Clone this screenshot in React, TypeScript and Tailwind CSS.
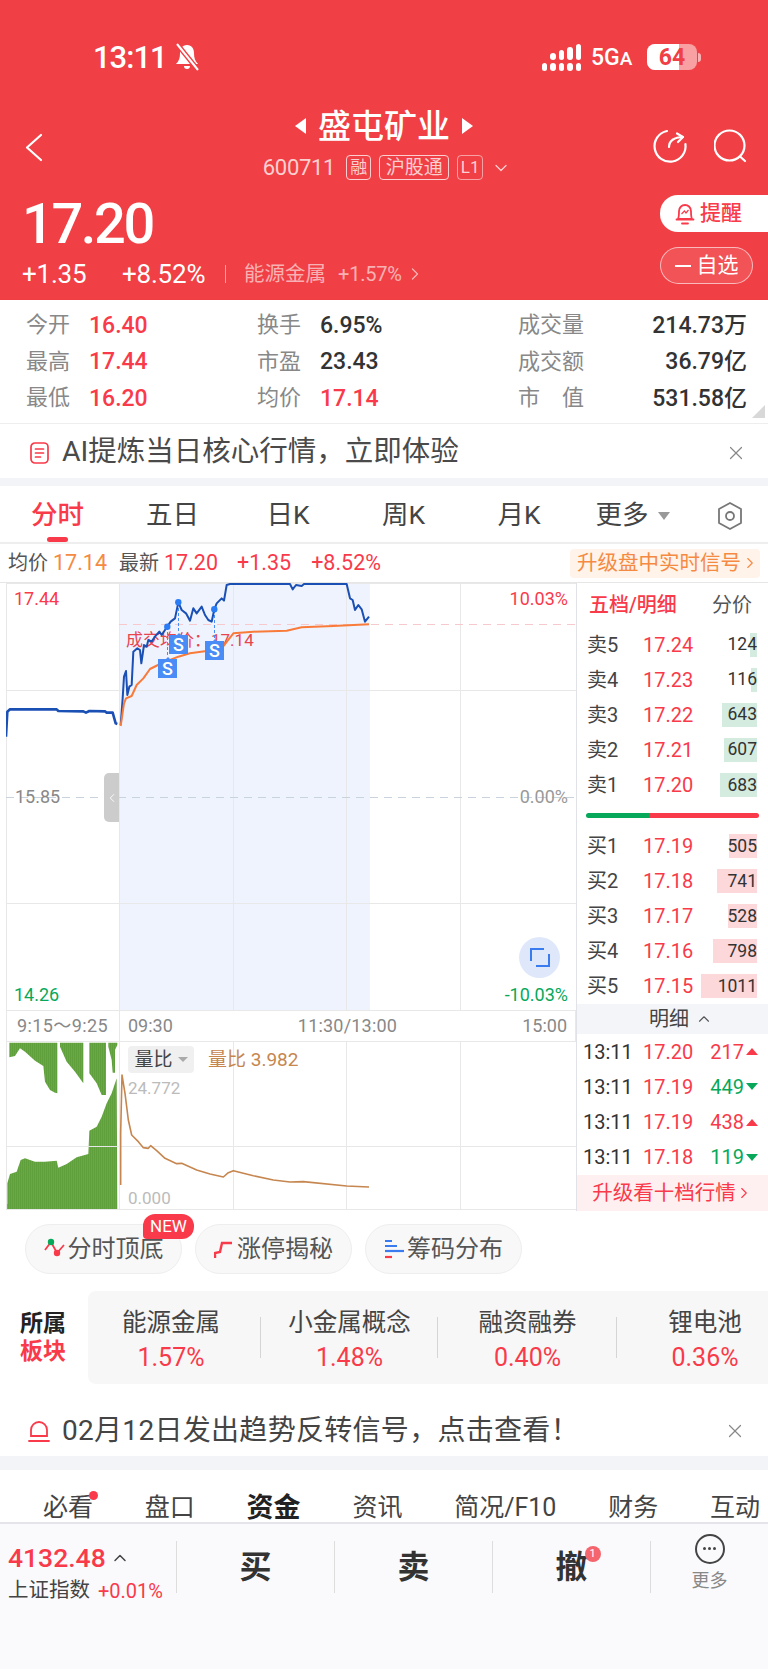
import { X, ChevronLeft, ChevronRight, ChevronDown, ChevronUp } from "lucide-react";

type Pt = [number, number];

// chart points were read off 3x crops, so map them back to page coordinates
const toPts = (pts: Pt[], baseY: number) => pts.map(([x, y]) => `${x / 3},${baseY + y / 3}`).join(" ");

const preMarket: Pt[] = [[18, 500], [22, 425], [30, 418], [170, 418], [175, 423], [250, 424], [258, 428], [268, 423], [315, 424], [320, 428], [338, 428], [347, 460], [352, 462]];
const priceLine: Pt[] = [[362, 465], [368, 385], [372, 320], [378, 303], [382, 375], [388, 350], [395, 345], [400, 245], [412, 235], [420, 240], [424, 280], [432, 225], [440, 230], [445, 210], [455, 215], [465, 200], [478, 185], [485, 195], [495, 180], [502, 170], [512, 155], [525, 145], [535, 97], [545, 120], [558, 130], [570, 152], [580, 115], [590, 130], [605, 110], [615, 135], [625, 150], [635, 155], [643, 118], [650, 100], [665, 85], [672, 92], [680, 45], [690, 42], [870, 42], [878, 58], [888, 45], [905, 48], [912, 42], [1040, 42], [1050, 85], [1058, 90], [1065, 120], [1075, 105], [1085, 118], [1095, 155], [1107, 140]];
const avgLine: Pt[] = [[362, 468], [372, 400], [378, 385], [395, 378], [410, 345], [430, 325], [450, 297], [480, 282], [510, 270], [535, 260], [570, 250], [620, 243], [665, 235], [700, 190], [760, 185], [860, 182], [905, 172], [1000, 168], [1107, 163]];
const ratioLine: Pt[] = [[362, 555], [362, 400], [366, 225], [375, 280], [385, 360], [395, 405], [415, 425], [430, 443], [445, 445], [452, 437], [470, 452], [495, 475], [530, 491], [545, 490], [590, 510], [630, 522], [670, 531], [685, 518], [700, 512], [760, 527], [820, 540], [870, 546], [910, 545], [1040, 558], [1107, 561]];
const bottomBars: Pt[] = [[22, 510], [22, 430], [30, 402], [50, 395], [62, 360], [75, 355], [105, 365], [135, 365], [170, 362], [175, 383], [200, 372], [230, 352], [265, 342], [268, 272], [290, 260], [305, 230], [320, 190], [335, 160], [350, 115], [352, 510]];
const topBars: Pt[] = [[28, 8], [28, 52], [45, 48], [60, 25], [75, 35], [105, 62], [130, 78], [135, 125], [150, 150], [165, 158], [172, 160], [172, 8], [180, 8], [180, 20], [200, 65], [225, 95], [250, 130], [250, 8], [268, 8], [268, 100], [290, 130], [305, 165], [318, 165], [318, 8], [325, 8], [325, 20], [335, 60], [338, 98], [345, 98], [345, 30], [352, 15], [352, 8]];

const stats = [
  ["今开", "16.40", "换手", "6.95%", "成交量", "214.73万"],
  ["最高", "17.44", "市盈", "23.43", "成交额", "36.79亿"],
  ["最低", "16.20", "均价", "17.14", "市　值", "531.58亿"],
] as const;

const asks = [
  ["卖5", "17.24", "124", 7],
  ["卖4", "17.23", "116", 6],
  ["卖3", "17.22", "643", 35],
  ["卖2", "17.21", "607", 33],
  ["卖1", "17.20", "683", 37],
] as const;
const bids = [
  ["买1", "17.19", "505", 28],
  ["买2", "17.18", "741", 40],
  ["买3", "17.17", "528", 29],
  ["买4", "17.16", "798", 44],
  ["买5", "17.15", "1011", 56],
] as const;
const trades = [
  ["17.20", "217", true],
  ["17.19", "449", false],
  ["17.19", "438", true],
  ["17.18", "119", false],
] as const;
const sectors = [
  ["能源金属", "1.57%", "w-[173px] pr-[7px]"],
  ["小金属概念", "1.48%", "w-[177px]"],
  ["融资融券", "0.40%", "w-[179px]"],
  ["锂电池", "0.36%", "w-[151px] pl-[25px]"],
];
const periods = [
  ["五日", "w-[115px]"],
  ["日K", "w-[116px]"],
  ["周K", "w-[115px]"],
  ["月K", "w-[116px]"],
];

function StatusBar() {
  return (
    <div className="flex h-[104px] items-center justify-between pl-[93px] pr-[67px] pt-[10px] text-white">
      <div className="flex items-center gap-[7px]">
        <span className="text-[31px] font-medium leading-none tracking-[-1px]">13:11</span>
        <svg width="26" height="28" viewBox="0 0 26 28" fill="white">
          <path d="M13 2c-5 0-7 4-7 8 0 5-1 8-4 11h22c-3-3-4-6-4-11 0-4-2-8-7-8zM10 23a3 3 0 0 0 6 0z" />
          <path d="M3 1l21 26" stroke="#f04045" strokeWidth="5" />
          <path d="M3 1l21 26" stroke="white" strokeWidth="2" />
        </svg>
      </div>
      <div className="flex items-center">
        <div className="flex items-end gap-[3px]">
          {[0, 1, 2, 3, 4].map((i) => (
            <div key={i} className="flex flex-col gap-[3px]">
              {i > 0 && <div className="w-[5.5px] rounded-full bg-white" style={{ height: 4 + i * 3 }} />}
              <div className="h-[8px] w-[5.5px] rounded-full bg-white" />
            </div>
          ))}
        </div>
        <span className="ml-[10px] w-[44px] text-[23px] font-medium leading-none">
          5G<span className="text-[19px]">A</span>
        </span>
        <div className="relative ml-[12px] flex h-[26px] w-[50px] items-center justify-center overflow-hidden rounded-[8px] bg-white/50">
          <div className="absolute inset-y-0 left-0 w-[32px] bg-white" />
          <span className="relative text-[23px] font-bold leading-none text-[#f04045]">64</span>
        </div>
        <div className="ml-[1px] h-[9px] w-[3px] rounded-r-full bg-white/60" />
      </div>
    </div>
  );
}

function NavRow() {
  return (
    <div className="grid h-[84px] grid-cols-[1fr_auto_1fr] text-white">
      <div className="flex items-center pl-[25px] pt-[2px]">
        <svg width="18" height="29" viewBox="0 0 18 29" fill="none" stroke="white" strokeWidth="2.2" strokeLinecap="round" strokeLinejoin="round">
          <path d="M16 2L2 14.5 16 27" />
        </svg>
      </div>
      <div className="flex flex-col items-center">
        <div className="flex h-[44px] items-center gap-[12px]">
          <div className="h-0 w-0 border-y-[8px] border-r-[11px] border-y-transparent border-r-white" />
          <span className="text-[33px] font-medium leading-none">盛屯矿业</span>
          <div className="h-0 w-0 border-y-[8px] border-l-[11px] border-y-transparent border-l-white" />
        </div>
        <div className="ml-[6px] mt-[7px] flex items-center text-white/75">
          <span className="text-[22px] leading-none tracking-[-0.3px]">600711</span>
          <span className="ml-[11px] flex h-[25px] w-[25px] items-center justify-center rounded-[4px] border border-white/75 text-[17px] leading-none">融</span>
          <span className="ml-[8px] flex h-[25px] w-[70px] items-center justify-center rounded-[4px] border border-white/75 text-[19px] leading-none">沪股通</span>
          <span className="ml-[8px] flex h-[25px] w-[26px] items-center justify-center rounded-[4px] border border-white/50 text-[17px] leading-none">L1</span>
          <ChevronDown className="ml-[8px] h-[20px] w-[20px]" strokeWidth={1.5} />
        </div>
      </div>
      <div className="flex items-center justify-end gap-[26px] pr-[18px]">
        <svg width="36" height="36" viewBox="0 0 36 36" fill="none" stroke="white" strokeWidth="2.2" strokeLinecap="round" strokeLinejoin="round">
          <path d="M15 3A15.5 15.5 0 1 0 33.4 16" />
          <path d="M17 19c0-6 5-10 14-10" />
          <path d="M25 5.5l6 3.5-5 5" />
        </svg>
        <svg width="36" height="36" viewBox="0 0 36 36" fill="none" stroke="white" strokeWidth="2.2" strokeLinecap="round">
          <circle cx="15.5" cy="17.5" r="15" />
          <path d="M26 28.5l5 4.5" />
        </svg>
      </div>
    </div>
  );
}

function PriceRow() {
  return (
    <div className="flex h-[112px] justify-between">
      <div className="flex flex-col pl-[22px] text-white">
        <span className="mt-[7px] h-[58px] text-[56px] font-medium leading-[58px] tracking-[-2.4px]">17.20</span>
        <div className="mt-[8px] flex items-center text-[26px] leading-none tracking-[-0.2px]">
          <span className="w-[100px]">+1.35</span>
          <span className="w-[103px]">+8.52%</span>
          <div className="h-[18px] w-px bg-white/50" />
          <span className="ml-[18px] text-[20.5px] tracking-normal text-white/60">能源金属</span>
          <span className="ml-[12px] text-[20px] text-white/60">+1.57%</span>
          <ChevronRight className="ml-[3px] h-[22px] w-[20px] text-white/60" strokeWidth={1.5} />
        </div>
      </div>
      <div className="flex flex-col items-end pt-[7px]">
        <div className="flex h-[37px] w-[108px] items-center gap-[5px] rounded-l-[18px] bg-white pl-[15px] text-[#f93a4a]">
          <svg width="20" height="24" viewBox="0 0 20 24" fill="none" stroke="currentColor" strokeWidth="1.8">
            <path d="M3 17c1-2 1-5 1-8a6 6 0 0 1 12 0c0 3 0 6 1 8zM1.5 17.5h17M7 21.5h6" strokeLinecap="round" strokeLinejoin="round" />
            <path d="M6.5 12l3-3 1.5 2 2.5-3" strokeWidth="1.2" />
          </svg>
          <span className="text-[21px] font-medium leading-none">提醒</span>
        </div>
        <div className="mr-[15px] mt-[15px] flex h-[37px] w-[93px] items-center justify-center gap-[6px] rounded-full border border-white/60 bg-white/10 text-[21px] leading-none text-white">
          <div className="h-[2px] w-[16px] bg-white" />
          自选
        </div>
      </div>
    </div>
  );
}

function StatsGrid() {
  return (
    <div className="relative h-[123px] bg-white pt-[7px]">
      {stats.map(([l1, v1, l2, v2, l3, v3], i) => (
        <div key={l1} className="grid h-[36.5px] grid-cols-[231px_261px_229px] items-center pl-[26px] text-[23px] leading-none">
          <div className="flex items-center">
            <span className="w-[63px] text-[22px] text-[#888888]">{l1}</span>
            <span className="font-medium text-[#f93a4a]">{v1}</span>
          </div>
          <div className="flex items-center">
            <span className="w-[63px] text-[22px] text-[#888888]">{l2}</span>
            <span className={i === 2 ? "font-medium text-[#f93a4a]" : "font-medium text-[#333333]"}>{v2}</span>
          </div>
          <div className="flex items-center justify-between">
            <span className="text-[22px] text-[#888888]">{l3}</span>
            <span className="font-medium text-[#333333]">{v3}</span>
          </div>
        </div>
      ))}
      <div className="absolute bottom-[5px] right-[3px] h-0 w-0 border-b-[13px] border-l-[13px] border-b-[#d8d8d8] border-l-transparent" />
    </div>
  );
}

function AiRow() {
  return (
    <div className="flex h-[55px] items-center border-t border-[#eeeeee] bg-white pl-[30px] pr-[21px] pt-[3px]">
      <svg width="19" height="22" viewBox="0 0 19 22" fill="none" stroke="#f93a4a" strokeWidth="1.7" strokeLinecap="round">
        <rect x="1" y="1" width="17" height="20" rx="4" />
        <path d="M5.5 7h8M5.5 11h8M5.5 15h5" />
      </svg>
      <span className="ml-[13px] text-[28.5px] leading-none text-[#4a4a4a]">AI提炼当日核心行情，立即体验</span>
      <X className="ml-auto h-[22px] w-[22px] text-[#888888]" strokeWidth={1.3} />
    </div>
  );
}

function PeriodTabs() {
  return (
    <div className="flex h-[58px] items-center border-b-2 border-[#eeeeee] bg-white pt-[3px] text-[26.5px] leading-none">
      <div className="relative flex h-full w-[115px] items-center justify-center font-medium text-[#f93a4a]">
        分时
        <div className="absolute bottom-0 h-[5px] w-[21px] rounded-full bg-[#f93a4a]" />
      </div>
      {periods.map(([t, w]) => (
        <div key={t} className={`flex items-center justify-center text-[#444444] ${w}`}>{t}</div>
      ))}
      <div className="flex w-[111px] items-center justify-center gap-[9px] text-[#444444]">
        更多
        <div className="h-0 w-0 border-x-[6px] border-t-[8px] border-x-transparent border-t-[#999999]" />
      </div>
      <svg className="ml-[28px]" width="28" height="30" viewBox="0 0 28 30" fill="none" stroke="#777777" strokeWidth="1.8">
        <path d="M14 2l11 6v14l-11 6-11-6V8z" strokeLinejoin="round" />
        <circle cx="14" cy="15" r="4" />
      </svg>
    </div>
  );
}

function QuoteLine() {
  return (
    <div className="flex h-[39px] items-center justify-between border-b border-[#e6e6e6] bg-white pl-[8px] pr-[8px] text-[21.5px] leading-none">
      <div className="flex items-center">
        <span className="text-[20px] text-[#555555]">均价</span>
        <span className="ml-[5px] text-[#f58a42]">17.14</span>
        <span className="ml-[12px] text-[20px] text-[#555555]">最新</span>
        <span className="ml-[5px] text-[#f93a4a]">17.20</span>
        <span className="ml-[19px] text-[#f93a4a]">+1.35</span>
        <span className="ml-[20px] text-[#f93a4a]">+8.52%</span>
      </div>
      <div className="flex h-[29px] w-[190px] items-center justify-center rounded-[4px] bg-[#fff3ea] text-[20.5px] text-[#f58a42]">
        升级盘中实时信号
        <ChevronRight className="-mr-[6px] h-[24px] w-[18px]" strokeWidth={1.5} />
      </div>
    </div>
  );
}

function SellMark({ x, y }: { x: number; y: number }) {
  return (
    <g>
      <path d={`M${x} ${y}h8l2-2 2 2h7v19h-19z`} fill="#4a8cf5" />
      <text x={x + 9.5} y={y + 15.5} textAnchor="middle" fontSize="18" fontWeight="500" fill="white">S</text>
    </g>
  );
}

function PriceChart() {
  return (
    <div className="relative h-[427px]">
      <svg className="block" width="570" height="427" viewBox="6 583 570 427" fill="none">
        <rect x="119" y="583" width="251" height="427" fill="#eef3fe" />
        <g stroke="#e8e8e8" strokeWidth="1">
          <path d="M6.5 583v427M119.5 583v427M233.5 583v427M346.5 583v427M460.5 583v427M6 690.5h570M6 903.5h570M6 583.5h570" />
        </g>
        <path d="M6 797.5h570" stroke="#c9d3de" strokeWidth="1" strokeDasharray="8 6" />
        <path d="M119 624.5h457" stroke="#f7c9cc" strokeWidth="1" strokeDasharray="8 6" />
        <text x="126" y="646" fontSize="17" fill="#e8454f">成交均价：17.14</text>
        <path d="M167.5 627v30M178.5 603v30M214.5 610v30" stroke="#4a8cf5" strokeWidth="1" strokeDasharray="3 2" />
        <polyline points={toPts(preMarket, 570)} stroke="#1a4fb4" strokeWidth="2.6" strokeLinejoin="round" />
        <polyline points={toPts(priceLine, 570)} stroke="#1a4fb4" strokeWidth="2" strokeLinejoin="round" />
        <polyline points={toPts(avgLine, 570)} stroke="#f97b3a" strokeWidth="2" strokeLinejoin="round" />
        <circle cx="167.3" cy="626.7" r="3.2" fill="#2a7cf5" />
        <circle cx="178.3" cy="602.3" r="3.2" fill="#2a7cf5" />
        <circle cx="214.3" cy="609.3" r="3.2" fill="#2a7cf5" />
        <SellMark x={158} y={659} />
        <SellMark x={169} y={635} />
        <SellMark x={205} y={641} />
      </svg>
      <span className="absolute left-[8px] top-[7px] text-[18px] leading-[18px] text-[#f93a4a]">17.44</span>
      <span className="absolute right-[8px] top-[7px] text-[18px] leading-[18px] text-[#f93a4a]">10.03%</span>
      <span className="absolute left-[9px] top-[205px] text-[18px] leading-[18px] text-[#888888]">15.85</span>
      <span className="absolute right-[8px] top-[205px] text-[18px] leading-[18px] text-[#999999]">0.00%</span>
      <span className="absolute left-[8px] top-[403px] text-[18px] leading-[18px] text-[#08a85a]">14.26</span>
      <span className="absolute right-[8px] top-[403px] text-[18px] leading-[18px] text-[#08a85a]">-10.03%</span>
      <div className="absolute left-[98px] top-[190px] flex h-[49px] w-[15px] items-center justify-center rounded-l-[5px] bg-[#cccccc]">
        <ChevronLeft className="h-[20px] w-[14px] text-white" strokeWidth={1.5} />
      </div>
      <div className="absolute left-[513px] top-[354px] flex h-[41px] w-[41px] items-center justify-center rounded-full bg-[#dfe8fb]">
        <svg width="20" height="19" viewBox="0 0 20 19" fill="none" stroke="#3a7cf0" strokeWidth="2">
          <path d="M1 13V1h13M19 6v12H6" />
        </svg>
      </div>
    </div>
  );
}

function TimeAxis() {
  return (
    <div className="flex h-[32px] items-center border-x border-y border-[#e8e8e8] text-[18px] leading-none text-[#888888]">
      <div className="flex h-full w-[113px] items-center border-r border-[#e8e8e8] pl-[10px] tracking-[0.4px]">9:15～9:25</div>
      <span className="ml-[8px]">09:30</span>
      <span className="ml-[125px] tracking-[0.2px]">11:30/13:00</span>
      <span className="ml-auto mr-[8px]">15:00</span>
    </div>
  );
}

function RatioChart() {
  return (
    <div className="relative h-[168px]">
      <svg className="block" width="570" height="168" viewBox="6 1042 570 168" fill="none">
        <defs>
          <pattern id="volume-bars" width="2" height="4" patternUnits="userSpaceOnUse">
            <rect width="2" height="4" fill="#6aa846" />
            <rect width="1" height="4" fill="#5f9f3c" />
          </pattern>
        </defs>
        <polygon points={toPts(bottomBars, 1040)} fill="url(#volume-bars)" />
        <polygon points={toPts(topBars, 1040)} fill="url(#volume-bars)" />
        <rect x="6" y="1204" width="1.5" height="6" fill="#777777" />
        <path d="M6.5 1042v168M119.5 1042v168M233.5 1042v168M346.5 1042v168M460.5 1042v168M6 1146.5h570M6 1209.5h570" stroke="#e8e8e8" />
        <polyline points={toPts(ratioLine, 1000)} stroke="#c6864f" strokeWidth="1.6" strokeLinejoin="round" />
      </svg>
      <div className="absolute left-[122px] top-[4px] flex h-[27px] w-[66px] items-center justify-center gap-[5px] rounded-[4px] bg-[#f0f0f0] text-[19px] leading-none text-[#444444]">
        量比
        <div className="h-0 w-0 border-x-[5px] border-t-[5px] border-x-transparent border-t-[#aaaaaa]" />
      </div>
      <span className="absolute left-[202px] top-[8px] text-[19px] leading-[20px] text-[#c6864f]">量比 3.982</span>
      <span className="absolute left-[122px] top-[37px] text-[17px] leading-[18px] text-[#bbbbbb]">24.772</span>
      <span className="absolute left-[122px] top-[147px] text-[17px] leading-[18px] text-[#bbbbbb]">0.000</span>
    </div>
  );
}

function BookRow({ row, tint, rowHeight }: { row: readonly [string, string, string, number]; tint: string; rowHeight: string }) {
  const [label, price, qty, bar] = row;
  return (
    <div className={`relative flex items-center pl-[10px] pr-[11px] ${rowHeight}`}>
      <div className={`absolute right-[11px] h-[24px] ${tint}`} style={{ width: bar }} />
      <span className="w-[56px] text-[20px] leading-none text-[#444444]">{label}</span>
      <span className="relative text-[20px] leading-none text-[#f93a4a]">{price}</span>
      <span className="relative ml-auto text-[17.5px] leading-none text-[#333333]">{qty}</span>
    </div>
  );
}

function OrderBook() {
  return (
    <div className="flex w-[192px] flex-col border-l border-[#e0e2e8] bg-white">
      <div className="flex h-[44px] items-center justify-between pl-[12px] pr-[16px]">
        <span className="text-[20px] font-medium leading-none text-[#f93a4a]">五档/明细</span>
        <span className="text-[20px] leading-none text-[#555555]">分价</span>
      </div>
      {asks.map((r) => (
        <BookRow key={r[0]} row={r} tint="bg-[#d4ecdf]" rowHeight="h-[35.2px]" />
      ))}
      <div className="flex h-[26px] items-center pl-[9px] pr-[9px]">
        <div className="h-[5px] w-[63px] rounded-l-full bg-[#08a85a]" />
        <div className="h-[5px] flex-1 rounded-r-full bg-[#f93a4a]" />
      </div>
      {bids.map((r) => (
        <BookRow key={r[0]} row={r} tint="bg-[#fdd8da]" rowHeight="h-[35px]" />
      ))}
      <div className="flex h-[30px] items-center justify-center gap-[6px] bg-[#f3f5f9] pl-[17px] text-[20px] leading-none text-[#444444]">
        明细
        <ChevronUp className="h-[20px] w-[18px] text-[#555555]" strokeWidth={1.5} />
      </div>
      {trades.map(([price, qty, up], i) => (
        <div key={i} className="flex h-[35.25px] items-center pl-[6px] pr-[10px] text-[20px] leading-none">
          <span className="w-[60px] text-[#333333]">13:11</span>
          <span className="text-[#f93a4a]">{price}</span>
          <span className={up ? "ml-auto text-[#f93a4a]" : "ml-auto text-[#08a85a]"}>{qty}</span>
          {up ? (
            <div className="ml-[2px] h-0 w-0 border-x-[6px] border-b-[7px] border-x-transparent border-b-[#f93a4a]" />
          ) : (
            <div className="ml-[2px] h-0 w-0 border-x-[6px] border-t-[7px] border-x-transparent border-t-[#08a85a]" />
          )}
        </div>
      ))}
      <div className="flex h-[36px] items-center justify-center bg-[#fef0f0] text-[20.5px] leading-none text-[#f93a4a]">
        升级看十档行情
        <ChevronRight className="-ml-[1px] h-[20px] w-[18px]" strokeWidth={1.5} />
      </div>
    </div>
  );
}

function FeaturePills() {
  return (
    <div className="flex gap-[13px] pl-[25px] pt-[13px]">
      <div className="relative flex h-[50px] w-[157px] items-center justify-center gap-[2px] rounded-[25px] border border-[#eeeeee] bg-[#f8f8f8] text-[24px] leading-none text-[#555555]">
        <svg width="22" height="24" viewBox="0 0 22 24" fill="none">
          <path d="M1 13l6-8 6 11 7-8" stroke="#f93a4a" strokeWidth="1.8" />
          <circle cx="7" cy="5" r="3.2" fill="#08a85a" />
          <circle cx="13" cy="16" r="3.2" fill="#f93a4a" />
        </svg>
        分时顶底
        <div className="absolute -top-[11px] left-[117px] flex h-[25px] w-[51px] items-center justify-center rounded-t-[12px] rounded-br-[12px] rounded-bl-[4px] bg-[#f93a4a] text-[17px] leading-none text-white">NEW</div>
      </div>
      <div className="flex h-[50px] w-[157px] items-center justify-center gap-[3px] rounded-[25px] border border-[#eeeeee] bg-[#f8f8f8] text-[24px] leading-none text-[#555555]">
        <svg width="20" height="24" viewBox="0 0 20 24" fill="none" stroke="#f93a4a" strokeWidth="2.4">
          <path d="M1 21v-5l5-1 2-9h10" />
        </svg>
        涨停揭秘
      </div>
      <div className="flex h-[50px] w-[157px] items-center justify-center gap-[3px] rounded-[25px] border border-[#eeeeee] bg-[#f8f8f8] text-[24px] leading-none text-[#555555]">
        <svg width="20" height="24" viewBox="0 0 20 24" fill="none" strokeWidth="2.2">
          <path d="M1 4h7M1 9h12" stroke="#3a7cf0" />
          <path d="M1 14h19" stroke="#3a7cf0" />
          <path d="M1 20h7" stroke="#f93a4a" />
        </svg>
        筹码分布
      </div>
    </div>
  );
}

function Sectors() {
  return (
    <div className="mt-[17px] flex pl-[20px]">
      <div className="flex w-[68px] flex-col justify-center gap-[3px] text-[23px] font-bold leading-[25px]">
        <span className="text-[#222222]">所属</span>
        <span className="text-[#f93a4a]">板块</span>
      </div>
      <div className="flex h-[93px] flex-1 items-center rounded-l-[8px] bg-[#f7f7f7] pt-[6px]">
        {sectors.map(([name, pct, w], i) => (
          <div key={name} className={`relative flex flex-col items-center gap-[10px] leading-none ${w}`}>
            <span className="text-[24.5px] text-[#444444]">{name}</span>
            <span className="text-[25px] text-[#f93a4a]">{pct}</span>
            {i < 3 && <div className="absolute right-0 top-[6px] h-[41px] w-px bg-[#d5d5d5]" />}
          </div>
        ))}
      </div>
    </div>
  );
}

function SignalNotice() {
  return (
    <div className="flex h-[72px] items-center pl-[28px] pr-[22px] pt-[22px]">
      <svg width="22" height="24" viewBox="0 0 22 24" fill="none" stroke="#f93a4a" strokeWidth="1.8" strokeLinecap="round">
        <path d="M3 17V11a8 8 0 0 1 16 0v6zM1 22h20" />
      </svg>
      <span className="ml-[12px] text-[28px] leading-none tracking-[0.3px] text-[#444444]">02月12日发出趋势反转信号，点击查看！</span>
      <X className="ml-auto h-[22px] w-[22px] text-[#888888]" strokeWidth={1.3} />
    </div>
  );
}

function DetailTabs() {
  return (
    <div className="flex h-[54px] items-end justify-between border-b-2 border-[#e4e4ea] bg-white pl-[43px] pr-[8px] text-[25px] leading-[28px] text-[#444444]">
      <span className="relative">
        必看
        <div className="absolute -right-[5px] top-[-3px] h-[9px] w-[9px] rounded-full bg-[#f93a4a]" />
      </span>
      <span>盘口</span>
      <span className="text-[27px] font-bold text-[#222222]">资金</span>
      <span>资讯</span>
      <span>简况/F10</span>
      <span>财务</span>
      <span>互动</span>
    </div>
  );
}

function TradeAction({ label, badge }: { label: string; badge?: boolean }) {
  return (
    <div className="flex h-[52px] w-[158px] items-center justify-center border-l border-[#dddddd]">
      <span className="relative text-[32px] font-bold leading-none text-[#333333]">
        {label}
        {badge && (
          <span className="absolute -right-[13px] -top-[5px] flex h-[16px] w-[16px] items-center justify-center rounded-full bg-[#f4656d] text-[11px] font-normal leading-none text-white">1</span>
        )}
      </span>
    </div>
  );
}

function BottomBar() {
  return (
    <div className="flex flex-1 items-start bg-[#fafafc] pt-[17px]">
      <div className="flex w-[176px] flex-col pl-[8px] pt-[4px]">
        <div className="flex items-center">
          <span className="text-[26.5px] font-medium leading-none text-[#f93a4a]">4132.48</span>
          <ChevronUp className="ml-[4px] h-[20px] w-[20px] text-[#444444]" strokeWidth={1.8} />
        </div>
        <div className="mt-[9px] flex items-center">
          <span className="text-[20.5px] leading-none text-[#444444]">上证指数</span>
          <span className="ml-[8px] text-[20px] leading-none text-[#f93a4a]">+0.01%</span>
        </div>
      </div>
      <TradeAction label="买" />
      <TradeAction label="卖" />
      <TradeAction label="撤" badge />
      <div className="flex h-[52px] flex-1 flex-col items-center border-l border-[#dddddd]">
        <div className="-mt-[7px] flex h-[30px] w-[30px] items-center justify-center gap-[2px] rounded-full border-2 border-[#444444]">
          <div className="h-[3px] w-[3px] rounded-full bg-[#444444]" />
          <div className="h-[3px] w-[3px] rounded-full bg-[#444444]" />
          <div className="h-[3px] w-[3px] rounded-full bg-[#444444]" />
        </div>
        <span className="mt-[8px] text-[18px] leading-none text-[#888888]">更多</span>
      </div>
    </div>
  );
}

export default function App() {
  return (
    <div className="flex h-[1669px] w-[768px] flex-col overflow-hidden bg-white [font-family:Roboto,'Noto_Sans_CJK_SC',sans-serif]">
      <div className="h-[300px] bg-[#f04045]">
        <StatusBar />
        <NavRow />
        <PriceRow />
      </div>
      <StatsGrid />
      <AiRow />
      <div className="h-[8px] bg-[#f3f4f8]" />
      <PeriodTabs />
      <QuoteLine />
      <div className="flex pl-[6px]">
        <div className="w-[570px]">
          <PriceChart />
          <TimeAxis />
          <RatioChart />
        </div>
        <OrderBook />
      </div>
      <FeaturePills />
      <Sectors />
      <SignalNotice />
      <div className="h-[14px] bg-[#f3f4f8]" />
      <DetailTabs />
      <BottomBar />
    </div>
  );
}
